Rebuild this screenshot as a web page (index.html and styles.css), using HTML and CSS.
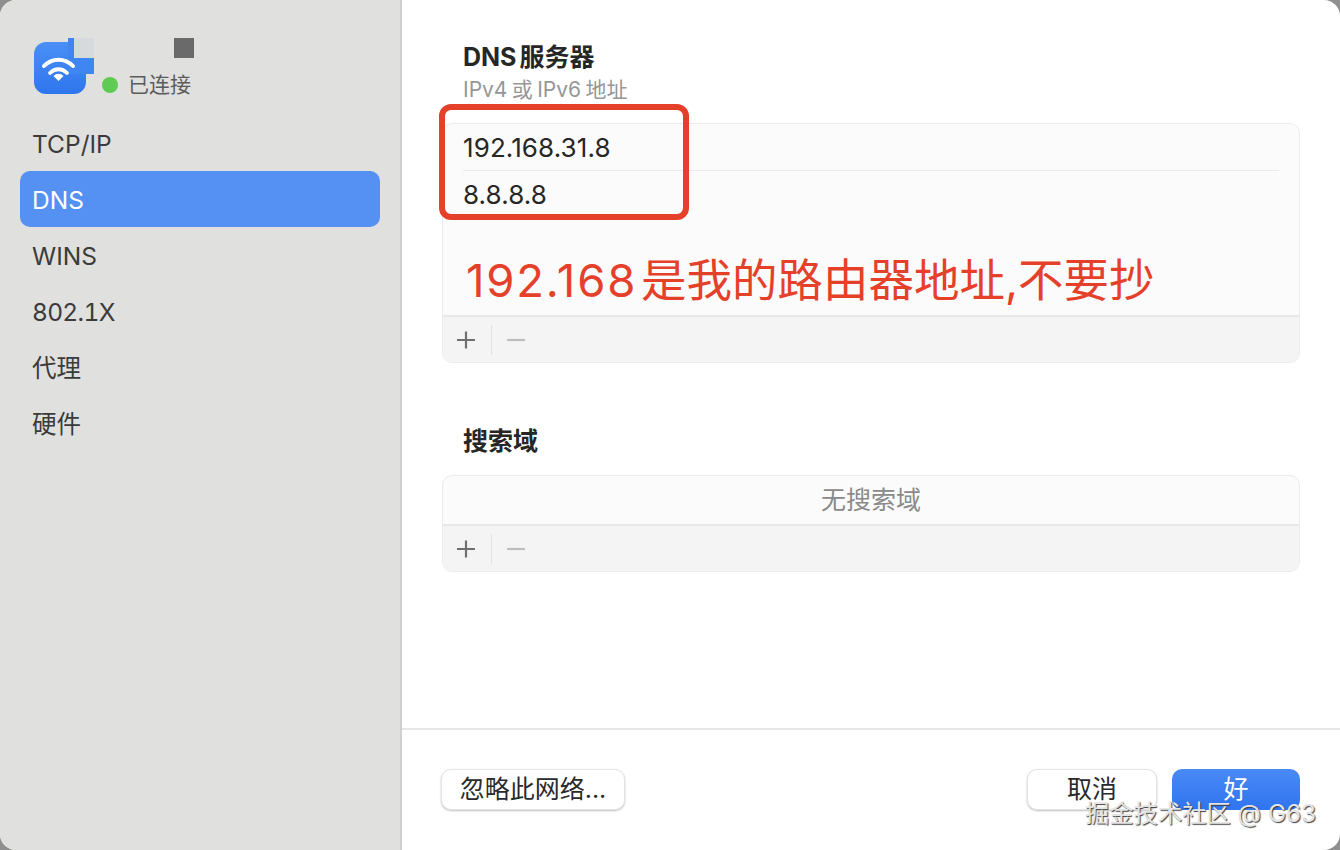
FILE: index.html
```html
<!DOCTYPE html>
<html lang="zh-CN">
<head>
<meta charset="utf-8">
<title>DNS</title>
<link rel="stylesheet" href="styles.css">
</head>
<body>
<div class="window">
  <aside class="sidebar">
    <div class="net">
      <div class="app-icon">
        <svg width="64" height="58" viewBox="0 0 64 58">
          <defs><linearGradient id="g" x1="0" y1="0" x2="0" y2="1"><stop offset="0" stop-color="#4a90f6"/><stop offset="1" stop-color="#2f76ee"/></linearGradient></defs>
          <rect x="0" y="4" width="52" height="52" rx="12" fill="url(#g)"/>
          <rect x="34" y="0" width="26" height="36" fill="#3f86f3"/>
          <rect x="40" y="0" width="20" height="20" fill="#d7dadd"/>
          <path d="M10 28 C18 19.500 31 19.500 39 28" fill="none" stroke="#fff" stroke-width="4" stroke-linecap="round"/>
          <path d="M16 35 C21 30 28 30 33 35" fill="none" stroke="#fff" stroke-width="3.800" stroke-linecap="round"/>
          <path d="M24.500 43 L19.500 38 C22.500 35 26.500 35 29.500 38 Z" fill="#fff"/>
        </svg>
      </div>
      <div class="net-info">
        <div class="redacted"></div>
        <div class="status"><span class="dot"></span>已连接</div>
      </div>
    </div>
    <nav class="nav">
      <div class="nav-item">TCP/IP</div>
      <div class="nav-item active">DNS</div>
      <div class="nav-item">WINS</div>
      <div class="nav-item nav-num">802.1X</div>
      <div class="nav-item">代理</div>
      <div class="nav-item">硬件</div>
    </nav>
  </aside>
  <main class="main">
    <div class="content">
      <section class="dns">
        <h2 class="title">DNS 服务器</h2>
        <p class="sub">IPv4 或 IPv6 地址</p>
        <div class="panel">
          <div class="list list-dns">
            <div class="row">192.168.31.8</div>
            <div class="row">8.8.8.8</div>
          </div>
          <div class="tools">
            <span class="tool plus"><svg width="20" height="20" viewBox="0 0 20 20"><path d="M10 1.500V18.500M1 10H19" stroke="#6f6f6f" stroke-width="2.200"/></svg></span>
            <span class="sep"></span>
            <span class="tool minus"><svg width="20" height="20" viewBox="0 0 20 20"><path d="M1 10H19" stroke="#bdbdbd" stroke-width="2.200"/></svg></span>
          </div>
        </div>
      </section>
      <section class="search">
        <h2 class="title">搜索域</h2>
        <div class="panel">
          <div class="list list-search">无搜索域</div>
          <div class="tools">
            <span class="tool plus"><svg width="20" height="20" viewBox="0 0 20 20"><path d="M10 1.500V18.500M1 10H19" stroke="#6f6f6f" stroke-width="2.200"/></svg></span>
            <span class="sep"></span>
            <span class="tool minus"><svg width="20" height="20" viewBox="0 0 20 20"><path d="M1 10H19" stroke="#bdbdbd" stroke-width="2.200"/></svg></span>
          </div>
        </div>
      </section>
    </div>
    <footer class="footer">
      <button class="btn btn-forget">忽略此网络...</button>
      <div class="actions">
        <button class="btn btn-cancel">取消</button>
        <button class="btn btn-ok">好</button>
      </div>
    </footer>
  </main>
  <div class="mark-box"></div>
  <div class="mark-text"><span class="mark-num">192.168</span> 是我的路由器地址,不要抄</div>
  <div class="watermark">掘金技术社区 @ G63</div>
</div>
</body>
</html>
```
FILE: styles.css
```css
* { box-sizing: border-box; }
html, body { margin: 0; height: 100%; }
body {
  background: #8f8f8f;
  font-family: Inter, "Noto Sans CJK SC", sans-serif;
  color: #2a2a2a;
  overflow: hidden;
}
.window {
  position: relative;
  width: 1340px;
  height: 850px;
  display: flex;
  background: #fff;
  border-radius: 16px;
  overflow: hidden;
}
.sidebar {
  width: 402px;
  flex: none;
  background: #e0e0de;
  border-right: 2px solid #cfcfcf;
  padding: 38px 20px 0;
}
.net { display: flex; height: 77px; padding-left: 14px; }
.app-icon { width: 68px; height: 58px; }
.app-icon svg { display: block; }
.net-info { position: relative; flex: 1; }
.redacted {
  width: 20px; height: 20px;
  background: #6a6a6a;
  margin: 0 0 0 72px;
}
.status {
  display: flex; align-items: center;
  margin-top: 12px;
  font-size: 21px;
  line-height: 30px;
  color: #5c5c5c;
}
.dot {
  width: 16px; height: 16px;
  border-radius: 50%;
  background: #5fcb55;
  margin-right: 10px;
}
.nav-item {
  height: 56px;
  line-height: 58px;
  padding-left: 12px;
  font-size: 24.500px;
  color: #3b3b3b;
  border-radius: 10px;
}
.nav-num { font-feature-settings: "tnum"; letter-spacing: -0.700px; }
.nav-item.active { background: #5590f3; color: #fff; }
.main {
  flex: 1;
  display: flex;
  flex-direction: column;
  min-width: 0;
}
.content { flex: 1; padding: 40px 40px 0; }
.title {
  margin: 0;
  padding-left: 21px;
  font-size: 25px;
  line-height: 34px;
  font-weight: 700;
  color: #262626;
  word-spacing: -3px;
}
.sub {
  margin: 0;
  padding-left: 21px;
  font-size: 21px;
  line-height: 32px;
  color: #969696;
  word-spacing: -1.500px;
}
.panel {
  width: 858px;
  border: 1px solid #ececec;
  border-radius: 10px;
  background: #fbfbfb;
  overflow: hidden;
}
.dns .panel { margin-top: 17px; }
.list-dns { height: 191px; padding: 0 20px; }
.row {
  height: 46px;
  line-height: 48px;
  font-size: 26px;
  letter-spacing: 0.100px;
  color: #262626;
}
.row + .row { border-top: 1px solid #ebebeb; }
.tools {
  display: flex;
  align-items: center;
  height: 47px;
  background: #f4f4f4;
  border-top: 2px solid #e8e8e8;
  padding-left: 13px;
}
.tool { display: flex; width: 20px; height: 20px; }
.sep { width: 1px; height: 30px; background: #e2e2e2; margin: 0 14px 0 15px; }
.search { margin-top: 59px; }
.search .title { line-height: 38px; }
.search .panel { margin-top: 15px; }
.list-search {
  height: 48px;
  line-height: 49px;
  text-align: center;
  font-size: 25px;
  color: #8a8a8a;
}
.footer {
  height: 122px;
  flex: none;
  border-top: 2px solid #e6e6e6;
  display: flex;
  justify-content: space-between;
  padding: 39px 40px 0 39px;
}
.actions { display: flex; gap: 15px; }
.btn {
  height: 41px;
  font-family: inherit;
  font-size: 25px;
  line-height: 36px;
  padding: 0 0 2px;
  border-radius: 10px;
  border: 1px solid #e4e4e4;
  background: #fff;
  color: #2a2a2a;
  box-shadow: 0 1px 2px rgba(0,0,0,.25);
}
.btn-forget { width: 184px; }
.btn-cancel { width: 130px; }
.btn-ok {
  width: 128px;
  border: none;
  color: #fff;
  background: linear-gradient(#4a8af5, #2f74f0);
  box-shadow: none;
}
.mark-box {
  position: absolute;
  left: 439px; top: 104px;
  width: 250px; height: 116px;
  border: 6px solid #e5402a;
  border-radius: 12px;
}
.mark-text {
  position: absolute;
  left: 466px; top: 252px;
  font-size: 45.500px;
  line-height: 58px;
  color: #e5402a;
  white-space: nowrap;
  word-spacing: -9px;
}
.mark-num { letter-spacing: 1.800px; }
.watermark {
  position: absolute;
  left: 1085px; top: 796px;
  font-size: 24.300px;
  line-height: 34px;
  color: #e4e4e4;
  white-space: nowrap;
  text-shadow: 1px 1px 1px #3c3c3c;
}
```
